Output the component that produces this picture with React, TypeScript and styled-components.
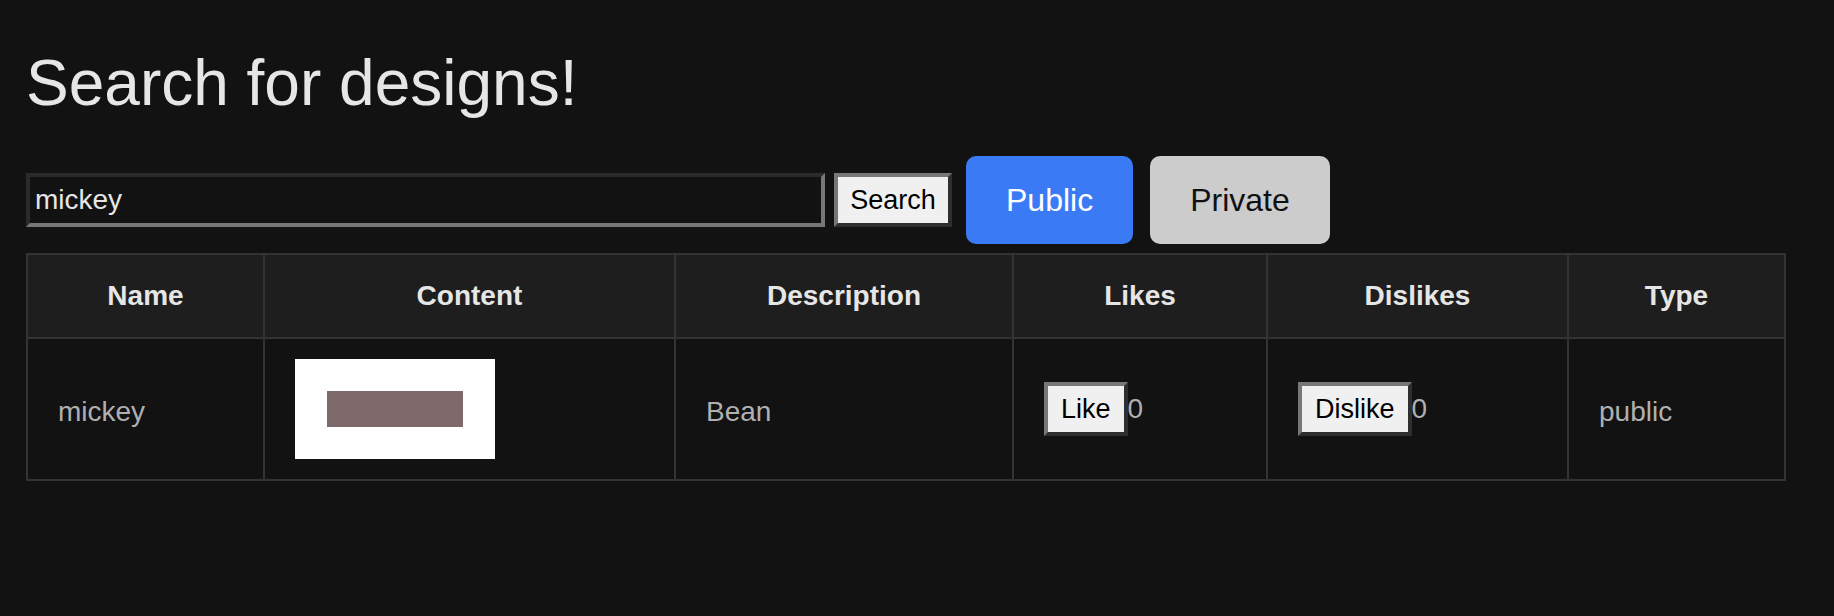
import styled, { createGlobalStyle } from "styled-components";

interface Design {
  name: string;
  description: string;
  likes: number;
  dislikes: number;
  type: string;
}

interface ToggleProps {
  $active: boolean;
}

const GlobalStyle = createGlobalStyle`
  html, body {
    margin: 0;
    background: #121212;
  }
  body {
    font-family: "Liberation Sans", Arial, Helvetica, sans-serif;
    color: #e6e6e6;
  }
`;

const Page = styled.div`
  padding: 46px 26px 0 26px;
`;

const Title = styled.h1`
  margin: 0;
  font-size: 64px;
  font-weight: normal;
  line-height: 74px;
  color: #e6e6e6;
`;

const Toolbar = styled.div`
  display: flex;
  align-items: center;
  margin-top: 36px;
  height: 88px;
`;

const SearchInput = styled.input`
  box-sizing: border-box;
  width: 799px;
  height: 54px;
  margin: 0;
  padding: 0 5px;
  background: #121212;
  color: #e6e6e6;
  font-family: inherit;
  font-size: 28px;
  border-style: solid;
  border-width: 4px;
  border-color: #2b2b2b #777 #777 #2b2b2b;
  outline: none;
`;

const RaisedButton = styled.button`
  box-sizing: border-box;
  height: 54px;
  margin: 0;
  padding: 0 12px;
  background: #f0f0f0;
  color: #000;
  font-family: inherit;
  font-size: 27px;
  line-height: 46px;
  border-style: solid;
  border-width: 4px;
  border-color: #777 #2e2e2e #2e2e2e #777;
  cursor: pointer;
`;

const SearchButton = styled(RaisedButton)`
  margin-left: 9px;
  width: 118px;
`;

const ToggleButton = styled.button<ToggleProps>`
  box-sizing: border-box;
  height: 88px;
  padding: 0 40px;
  border: none;
  border-radius: 10px;
  font-family: inherit;
  font-size: 32px;
  background: ${(p) => (p.$active ? "#3a7bf5" : "#cccccc")};
  color: ${(p) => (p.$active ? "#ffffff" : "#111111")};
  cursor: pointer;
  margin-left: ${(p) => (p.$active ? "14px" : "17px")};
`;

const Table = styled.table`
  margin-top: 9px;
  width: 1760px;
  table-layout: fixed;
  border-collapse: collapse;
  border: 2px solid #333;
`;

const HeadCell = styled.th`
  padding: 25px 30px;
  background: #1e1e1e;
  border: 2px solid #333;
  font-size: 28px;
  line-height: 32px;
  font-weight: bold;
  color: #e6e6e6;
  text-align: center;
`;

const Cell = styled.td`
  padding: 20px 30px;
  border: 2px solid #333;
  font-size: 28px;
  line-height: 32px;
  color: #b0b0b0;
  text-align: left;
  vertical-align: middle;
`;

const TextCell = styled(Cell)`
  padding-top: 23px;
  padding-bottom: 17px;
`;

const Thumb = styled.svg`
  display: block;
  width: 200px;
  height: 100px;
`;

const VoteGroup = styled.div`
  display: flex;
  align-items: center;
`;

const VoteButton = styled(RaisedButton)`
  padding: 0 13px;
`;

const Count = styled.span`
  color: #b0b0b0;
`;

const columns = [
  { label: "Name", width: 237 },
  { label: "Content", width: 411 },
  { label: "Description", width: 338 },
  { label: "Likes", width: 254 },
  { label: "Dislikes", width: 301 },
  { label: "Type", width: 217 },
];

const designs: Design[] = [
  { name: "mickey", description: "Bean", likes: 0, dislikes: 0, type: "public" },
];

function App() {
  return (
    <Page>
      <GlobalStyle />
      <Title>Search for designs!</Title>
      <Toolbar>
        <SearchInput defaultValue="mickey" />
        <SearchButton>Search</SearchButton>
        <ToggleButton $active={true}>Public</ToggleButton>
        <ToggleButton $active={false}>Private</ToggleButton>
      </Toolbar>
      <Table>
        <colgroup>
          {columns.map((col) => (
            <col key={col.label} style={{ width: col.width }} />
          ))}
        </colgroup>
        <thead>
          <tr>
            {columns.map((col) => (
              <HeadCell key={col.label}>{col.label}</HeadCell>
            ))}
          </tr>
        </thead>
        <tbody>
          {designs.map((d) => (
            <tr key={d.name}>
              <TextCell>{d.name}</TextCell>
              <Cell>
                <Thumb viewBox="0 0 200 100">
                  <rect x="0" y="0" width="200" height="100" fill="#ffffff" />
                  <rect x="32" y="32" width="136" height="36" fill="#7e6a6a" />
                </Thumb>
              </Cell>
              <TextCell>{d.description}</TextCell>
              <Cell>
                <VoteGroup>
                  <VoteButton>Like</VoteButton>
                  <Count>{d.likes}</Count>
                </VoteGroup>
              </Cell>
              <Cell>
                <VoteGroup>
                  <VoteButton>Dislike</VoteButton>
                  <Count>{d.dislikes}</Count>
                </VoteGroup>
              </Cell>
              <TextCell>{d.type}</TextCell>
            </tr>
          ))}
        </tbody>
      </Table>
    </Page>
  );
}

export default App;
